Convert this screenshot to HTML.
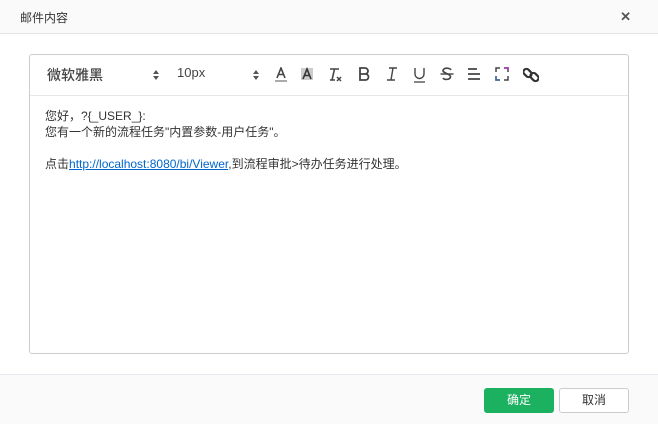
<!DOCTYPE html>
<html><head><meta charset="utf-8"><style>
*{margin:0;padding:0;box-sizing:border-box}
body{width:658px;height:424px;background:#fff;font-family:"Liberation Sans","Noto Sans CJK SC",sans-serif;position:relative;overflow:hidden;color:#333}
.hd{position:absolute;left:0;top:0;width:658px;height:34px;background:#fafafa;border-bottom:1px solid #e5e5e5}
.hd .t{position:absolute;left:20px;top:9px;font-size:12px;color:#333}
.hd .x{position:absolute;right:27px;top:9px;font-size:13px;font-weight:bold;color:#555}
.ed{position:absolute;left:29px;top:54px;width:600px;height:300px;border:1px solid #ccc;border-radius:3px}
.tb{position:absolute;left:0;top:0;width:598px;height:41px;border-bottom:1px solid #e6e6e6}
.tb span{position:absolute;top:10px;font-size:13px;color:#444}
.tb svg{position:absolute;top:12px}
.body{position:absolute;left:15px;top:53px;font-size:12px;line-height:16px;color:#333}
.body a{color:#06c;text-decoration:underline}
.ft{position:absolute;left:0;top:374px;width:658px;height:50px;background:#fafafa;border-top:1px solid #e8e8ef}
.b{position:absolute;top:13px;height:25px;width:70px;border-radius:3px;font-size:12px;text-align:center;line-height:23px}
.ok{left:484px;background:#1cb160;color:#fff;border:1px solid #1cb160}
.cn{left:559px;background:#fff;color:#333;border:1px solid #ccc}
</style></head><body>
<div class="hd"><div class="t">邮件内容</div><div class="x">✕</div></div>
<div class="ed">
 <div class="tb">
  <span style="left:17px;font-weight:500;font-size:14px">微软雅黑</span>
  <svg style="left:122px;top:14px" width="8" height="12" viewBox="0 0 8 12"><path d="M1 5L4 1 7 5zM1 7L4 11 7 7z" fill="#555"/></svg>
  <span style="left:147px;">10px</span>
  <svg style="left:222px;top:14px" width="8" height="12" viewBox="0 0 8 12"><path d="M1 5L4 1 7 5zM1 7L4 11 7 7z" fill="#555"/></svg>
  <svg style="left:244px" width="14" height="16" viewBox="0 0 14 16"><path d="M3 11L7 1 11 11M4.5 7.5h5" stroke="#444" stroke-width="1.6" fill="none"/><rect x="1" y="13" width="12" height="2" fill="#aaa"/></svg>
  <svg style="left:270px" width="14" height="16" viewBox="0 0 14 16"><rect x="1" y="1" width="12" height="12" fill="#ccc"/><path d="M3 12L7 2 11 12M4.5 8.5h5" stroke="#333" stroke-width="1.6" fill="none"/></svg>
  <svg style="left:299px" width="14" height="16" viewBox="0 0 14 16"><path d="M1 2h9M5.5 2L3 13M1 13h5" stroke="#444" stroke-width="1.6" fill="none"/><path d="M8 10l4 4M12 10l-4 4" stroke="#444" stroke-width="1.5"/></svg>
  <svg style="left:328px" width="12" height="14" viewBox="0 0 12 14"><path d="M2 1h5a3 3 0 010 6H2zM2 7h5.5a3 3 0 010 6H2z" stroke="#444" stroke-width="1.8" fill="none"/></svg>
  <svg style="left:356px" width="12" height="14" viewBox="0 0 12 14"><path d="M3 1h8M1 13h8M7 1L5 13" stroke="#444" stroke-width="1.4" fill="none"/></svg>
  <svg style="left:383px" width="13" height="16" viewBox="0 0 13 16"><path d="M2 1v6a4.5 4.5 0 009 0V1" stroke="#444" stroke-width="1.4" fill="none"/><path d="M1 15h11" stroke="#444" stroke-width="1.3"/></svg>
  <svg style="left:410px" width="14" height="14" viewBox="0 0 14 14"><path d="M11 3C10 1 4 0 3 3.5 2.5 6 11 7 10.5 10 10 13 4 13 3 11" stroke="#444" stroke-width="1.6" fill="none"/><path d="M0.5 7h13" stroke="#444" stroke-width="1.4"/></svg>
  <svg style="left:437px" width="14" height="14" viewBox="0 0 14 14"><path d="M1 2h9M1 7h12M1 12h12" stroke="#444" stroke-width="1.8"/></svg>
  <svg style="left:465px" width="14" height="14" viewBox="0 0 14 14"><path d="M1 5V1h4M9 1h4v4M13 9v4H9M5 13H1V9" stroke="#444" stroke-width="1.5" fill="none"/><path d="M9 1h4v3" stroke="#a23ab8" stroke-width="1.5" fill="none"/><path d="M1 10v3h3" stroke="#3a6ab8" stroke-width="1.5" fill="none"/></svg>
  <svg style="left:493px" width="16" height="16" viewBox="0 0 16 16"><g stroke="#333" stroke-width="2.2" fill="none"><rect x="1.5" y="1.5" width="6" height="9" rx="3" transform="rotate(-45 4.5 6)"/><rect x="8.5" y="5.5" width="6" height="9" rx="3" transform="rotate(-45 11.5 10)"/></g></svg>
 </div>
 <div class="body">您好，?{_USER_}:<br>您有一个新的流程任务"内置参数-用户任务"。<br><br>点击<a>http://localhost:8080/bi/Viewer</a>,到流程审批&gt;待办任务进行处理。</div>
</div>
<div class="ft"><div class="b ok">确定</div><div class="b cn">取消</div></div>
</body></html>
